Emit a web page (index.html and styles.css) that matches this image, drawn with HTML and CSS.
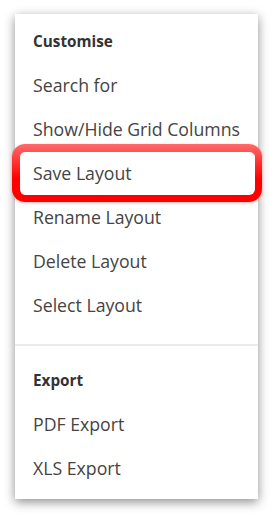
FILE: index.html
```html
<!DOCTYPE html>
<html lang="en">
<head>
    <meta charset="UTF-8">
    <meta name="viewport" content="width=device-width, initial-scale=1.0">
    <title>Grid menu</title>
    <link rel="stylesheet" href="styles.css">
</head>
<body>
    <!-- Menu contextuel de la grille -->
    <div class="menu">
        <div class="menu-group">
            <div class="menu-header">Customise</div>
            <div class="menu-item">Search for</div>
            <div class="menu-item">Show/Hide Grid Columns</div>
            <div class="menu-item highlight">Save Layout</div>
            <div class="menu-item">Rename Layout</div>
            <div class="menu-item">Delete Layout</div>
            <div class="menu-item">Select Layout</div>
        </div>
        <div class="menu-group">
            <div class="menu-header">Export</div>
            <div class="menu-item">PDF Export</div>
            <div class="menu-item">XLS Export</div>
        </div>
    </div>
</body>
</html>
```

FILE: styles.css
```css
/* Reset de base */
* {
    margin: 0;
    padding: 0;
    box-sizing: border-box;
}

body {
    font-family: 'Open Sans', 'Noto Sans', sans-serif;
    background-color: #fff;
    color: #444;
    padding: 14px 17px 18px 15px;
}

/* Panneau du menu */
.menu {
    width: 243px;
    height: 485px;
    background: #fff;
    box-shadow: 0 3px 10px rgba(0, 0, 0, 0.45);
    padding: 5px 0 8px;
}

.menu-group {
    padding-bottom: 17px;
}

.menu-group + .menu-group {
    border-top: 2px solid #ebebeb;
    padding-top: 12px;
    padding-bottom: 0;
}

.menu-header {
    height: 44px;
    line-height: 44px;
    padding-left: 18px;
    font-size: 15.3px;
    font-weight: 700;
    color: #333;
}

.menu-item {
    height: 44px;
    line-height: 44px;
    padding-left: 18px;
    font-size: 17.7px;
    color: #444;
    white-space: nowrap;
}

/* Cadre rouge autour de l'élément mis en avant */
.highlight {
    position: relative;
    z-index: 0;
}

.highlight::before {
    content: "";
    position: absolute;
    top: -7px;
    bottom: -7px;
    left: -3px;
    right: -4px;
    z-index: -1;
    border: 7px solid transparent;
    border-top-width: 8px;
    border-left-width: 8px;
    border-radius: 13px;
    background: linear-gradient(#fff, #fff) padding-box,
                linear-gradient(#ff6b6b, #ff0000 60%) border-box;
    box-shadow: 0 1px 3px rgba(255, 0, 0, 0.3);
}
```
